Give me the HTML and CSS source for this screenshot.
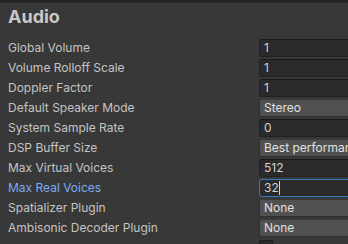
FILE: index.html
```html
<!DOCTYPE html>
<html>
<head>
<meta charset="utf-8">
<link rel="stylesheet" href="styles.css">
</head>
<body>
<div class="topbar"></div>
<div class="panel">
  <h1 class="title">Audio</h1>
  <div class="rows">
    <div class="row"><span class="label">Global Volume</span><div class="field text">1</div></div>
    <div class="row"><span class="label">Volume Rolloff Scale</span><div class="field text">1</div></div>
    <div class="row"><span class="label">Doppler Factor</span><div class="field text">1</div></div>
    <div class="row"><span class="label">Default Speaker Mode</span><div class="field drop">Stereo</div></div>
    <div class="row"><span class="label">System Sample Rate</span><div class="field text">0</div></div>
    <div class="row"><span class="label">DSP Buffer Size</span><div class="field drop">Best performance</div></div>
    <div class="row"><span class="label">Max Virtual Voices</span><div class="field text">512</div></div>
    <div class="row"><span class="label active">Max Real Voices</span><div class="field text focus">32<span class="caret"></span></div></div>
    <div class="row"><span class="label">Spatializer Plugin</span><div class="field drop">None</div></div>
    <div class="row"><span class="label">Ambisonic Decoder Plugin</span><div class="field drop">None</div></div>
    <div class="row"><span class="label"></span><div class="check"></div></div>
  </div>
</div>
</body>
</html>
```
FILE: styles.css
```css
html, body {
  margin: 0;
  padding: 0;
  background: #383838;
  overflow: hidden;
  width: 348px;
  height: 244px;
}
body {
  font-family: Inter, "Noto Sans", sans-serif;
  color: #c4c4c4;
}
.topbar {
  height: 2px;
  background: #232323;
  border-bottom: 1px solid #2e2e2e;
}
.panel {
  padding-left: 8px;
}
.title {
  margin: 0;
  height: 35px;
  font-size: 18px;
  font-weight: 700;
  line-height: 24px;
  padding-top: 2px;
  box-sizing: border-box;
  color: #c8c8c8;
}
.rows {
  display: flex;
  flex-direction: column;
}
.row {
  display: grid;
  grid-template-columns: 251px 120px;
  height: 20px;
  align-items: center;
}
.label {
  font-size: 12px;
  line-height: 20px;
  white-space: nowrap;
  color: #c4c4c4;
}
.label.active {
  color: #7babf5;
}
.field {
  height: 18px;
  box-sizing: border-box;
  border-radius: 3px;
  font-size: 12px;
  line-height: 16px;
  padding-left: 4px;
  white-space: nowrap;
  overflow: hidden;
  color: #d2d2d2;
}
.field.text {
  background: #2a2a2a;
  border: 1px solid #212121;
  border-top-color: #1a1a1a;
}
.field.drop {
  background: #515151;
  border: 1px solid #303030;
  border-top-color: #3a3a3a;
  color: #e0e0e0;
}
.field.focus {
  border-color: #3a79bb;
  background: #2a2a2a;
}
.caret {
  display: inline-block;
  width: 1px;
  height: 14px;
  background: #d2d2d2;
  vertical-align: -3px;
}
.check {
  margin-top: 2px;
  width: 14px;
  height: 14px;
  align-self: start;
  background: #2a2a2a;
  border: 1px solid #1e1e1e;
  border-radius: 2px;
  box-sizing: border-box;
}
```
